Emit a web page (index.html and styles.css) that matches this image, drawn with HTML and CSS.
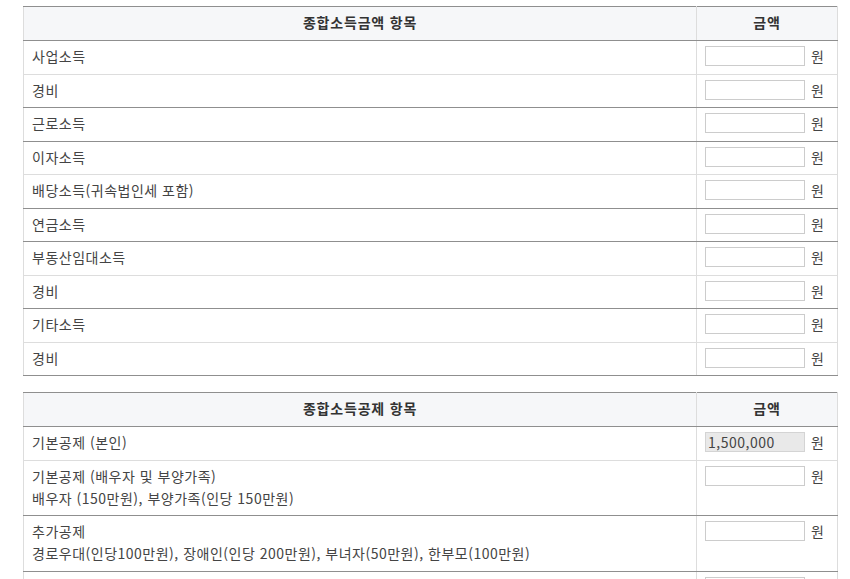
FILE: index.html
```html
<!DOCTYPE html>
<html lang="ko">
<head>
<meta charset="utf-8">
<title>종합소득세 계산</title>
<link rel="stylesheet" href="styles.css">
</head>
<body>
<div class="page">
  <table class="calc">
    <thead>
      <tr><th class="item">종합소득금액 항목</th><th class="amt">금액</th></tr>
    </thead>
    <tbody>
      <tr class="soft"><td class="item">사업소득</td><td class="amt"><div class="field"><input type="text"><span>원</span></div></td></tr>
      <tr><td class="item">경비</td><td class="amt"><div class="field"><input type="text"><span>원</span></div></td></tr>
      <tr><td class="item">근로소득</td><td class="amt"><div class="field"><input type="text"><span>원</span></div></td></tr>
      <tr class="soft"><td class="item">이자소득</td><td class="amt"><div class="field"><input type="text"><span>원</span></div></td></tr>
      <tr><td class="item">배당소득(귀속법인세 포함)</td><td class="amt"><div class="field"><input type="text"><span>원</span></div></td></tr>
      <tr><td class="item">연금소득</td><td class="amt"><div class="field"><input type="text"><span>원</span></div></td></tr>
      <tr class="soft"><td class="item">부동산임대소득</td><td class="amt"><div class="field"><input type="text"><span>원</span></div></td></tr>
      <tr><td class="item">경비</td><td class="amt"><div class="field"><input type="text"><span>원</span></div></td></tr>
      <tr class="soft"><td class="item">기타소득</td><td class="amt"><div class="field"><input type="text"><span>원</span></div></td></tr>
      <tr><td class="item">경비</td><td class="amt"><div class="field"><input type="text"><span>원</span></div></td></tr>
    </tbody>
  </table>

  <table class="calc">
    <thead>
      <tr><th class="item">종합소득공제 항목</th><th class="amt">금액</th></tr>
    </thead>
    <tbody>
      <tr class="soft"><td class="item">기본공제 (본인)</td><td class="amt"><div class="field"><input type="text" value="1,500,000" disabled><span>원</span></div></td></tr>
      <tr><td class="item">기본공제 (배우자 및 부양가족)<br>배우자 (150만원), 부양가족(인당 150만원)</td><td class="amt"><div class="field"><input type="text"><span>원</span></div></td></tr>
      <tr><td class="item">추가공제<br>경로우대(인당100만원), 장애인(인당 200만원), 부녀자(50만원), 한부모(100만원)</td><td class="amt"><div class="field"><input type="text"><span>원</span></div></td></tr>
      <tr><td class="item"><span class="tail">연금보험료공제</span></td><td class="amt"><div class="field"><input type="text"></div></td></tr>
    </tbody>
  </table>
</div>
</body>
</html>
```

FILE: styles.css
```css
html, body {
  margin: 0;
  padding: 0;
  background: #ffffff;
}

body {
  font-family: "Noto Sans CJK KR", "Noto Sans", sans-serif;
  font-size: 14px;
  color: #444444;
  letter-spacing: 0.5px;
}

.page {
  padding: 6px 0 0 23px;
  width: 815px;
}

.calc {
  width: 815px;
  border-collapse: collapse;
  table-layout: fixed;
  margin-bottom: 16px;
}

.calc th,
.calc td {
  border-left: 1px solid #dddddd;
  border-right: 1px solid #dddddd;
  border-bottom: 1px solid #8f8f8f;
  vertical-align: top;
  line-height: 22px;
  text-align: left;
}

.calc thead th {
  border-top: 1px solid #8f8f8f;
  background: #f6f7f9;
  font-weight: bold;
  color: #333333;
  text-align: center;
  letter-spacing: 0.8px;
  padding: 4px 8px 7px;
  height: 22px;
}

.calc td {
  padding: 4px 8px 6.5px;
}

.calc tr.soft td {
  border-bottom-color: #dddddd;
}

.calc .amt {
  width: 124px;
}

.field {
  display: flex;
  align-items: center;
  gap: 6px;
  height: 22px;
}

.field input {
  box-sizing: border-box;
  width: 100px;
  height: 20px;
  margin: 0;
  padding: 0 2px;
  border: 1px solid #cccccc;
  border-radius: 0;
  background: #ffffff;
  font-family: "Noto Sans CJK KR", "Noto Sans", sans-serif;
  font-size: 14px;
  letter-spacing: 0.5px;
  color: #444444;
  outline: none;
}

.field input:disabled {
  background: #e9e9e9;
  border-color: #d4d4d4;
  color: #444444;
}

.field span {
  line-height: 22px;
}

.tail {
  visibility: hidden;
}
```
